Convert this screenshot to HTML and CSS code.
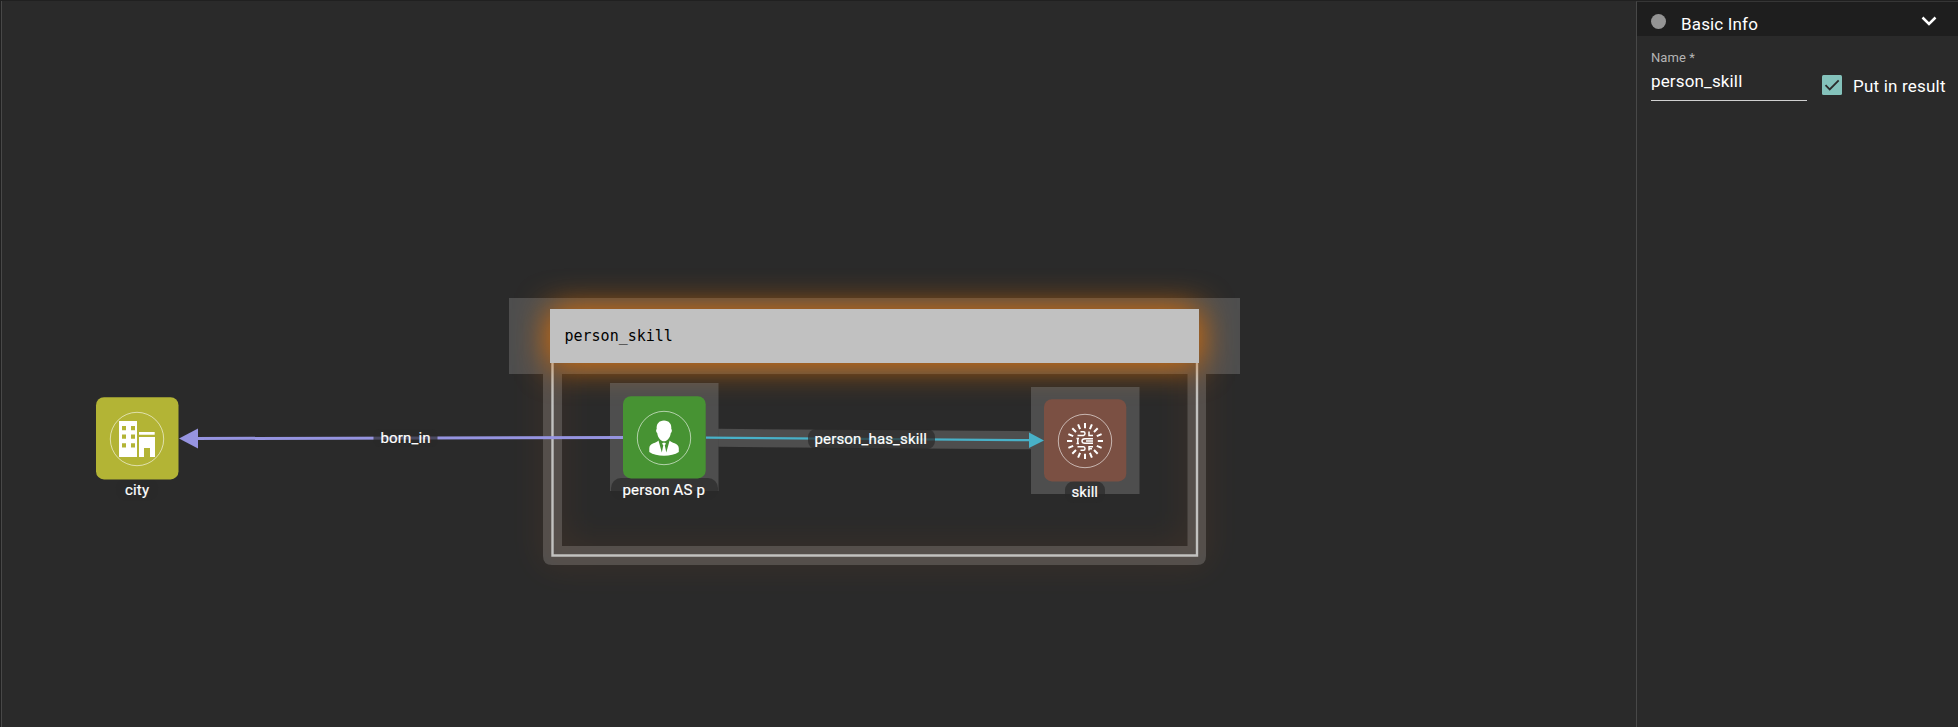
FILE: index.html
```
<!DOCTYPE html>
<html lang="en">
<head>
<meta charset="utf-8">
<title>Graph pattern</title>
<link rel="stylesheet" href="styles.css">
</head>
<body>
<div class="app">
  <main class="canvas">
    <svg class="graph" width="1636" height="727" viewBox="0 0 1636 727">
      <defs>
        <filter id="glow" filterUnits="userSpaceOnUse" x="440" y="220" width="880" height="440" color-interpolation-filters="sRGB">
          <feGaussianBlur stdDeviation="17"/>
        </filter>
      </defs>
      <rect class="halo" x="509" y="298" width="731" height="76"/>
      <path class="halo" fill-rule="evenodd" d="M543 374H1206V556Q1206 565 1197 565H552Q543 565 543 556ZM562 374V546H1187.5V374Z"/>
      <rect class="glow-frame" x="552" y="336" width="645" height="219.5" filter="url(#glow)"/>
      <path class="frame" d="M552.5 363V555.5H1197V363"/>
      <rect class="glow-head" x="550" y="309" width="649" height="56" filter="url(#glow)"/>
      <rect class="group-head" x="550" y="309" width="649" height="54"/>
      <text class="group-name" x="564.5" y="341">person_skill</text>

      <rect class="halo" x="610" y="383" width="108.5" height="108"/>
      <rect class="halo" x="1031" y="387" width="108.5" height="107"/>
      <path class="halo" d="M718.5 428.8L1031 431.2V449.3L718.5 446.8Z"/>

      <path class="edge-born" d="M196 438.5L623 437.6"/>
      <path class="arrow-born" d="M179 438.5L198 428.5V448.5Z"/>
      <path class="edge-skill" d="M706 437.7L1031 440.2"/>
      <path class="arrow-skill" d="M1044 440.4L1029 432.5V448Z"/>
      <rect class="label-bg" x="373.5" y="429" width="64" height="18" rx="6"/>
      <rect class="label-bg" x="808" y="429" width="127" height="20" rx="8"/>

      <rect class="label-bg" x="611" y="478" width="107" height="22" rx="10"/>
      <rect class="label-bg" x="1065" y="481" width="40" height="22" rx="9"/>
      <rect class="label-bg" x="116" y="478.500" width="42" height="22" rx="9"/>

      <rect class="city" x="96" y="397.200" width="82.500" height="82.200" rx="8"/>
      <circle class="ring" cx="137" cy="439" r="26.700"/>
      <path class="glyph" fill-rule="evenodd" d="M119 421H137V457H119ZM122 426v4.300h4v-4.300ZM131 426v4.300h4v-4.300ZM122 434.500v4.300h4v-4.300ZM131 434.500v4.300h4v-4.300ZM122 443.300v4.300h4v-4.300ZM131 443.300v4.300h4v-4.300Z"/>
      <path class="glyph" d="M139 432H154.700V434.700H139ZM139 437H155V457H150V448H144V457H139Z"/>

      <rect class="person" x="623" y="396.200" width="82.700" height="82.200" rx="8"/>
      <circle class="ring" cx="664" cy="438" r="26.700"/>
      <path class="glyph" d="M664 420.500C669 420.500 671.800 424 671.300 429C672.300 429.500 672 432.500 670.800 433C670.200 438 667 441.300 664 441.300S657.800 438 657.200 433C656 432.500 655.700 429.500 656.700 429C656.200 424 659 420.500 664 420.500Z"/>
      <path class="glyph" d="M658.500 440.500L661.800 452.500L663.300 445.300L662 443.800L663 442.800H665L666 443.800L664.800 445.300L666.300 452.500L669.600 440.500C671 443 678.500 443 678.800 448V452C675 454.500 670 455.800 664 455.800S653 454.500 649.300 452V448C649.600 443 657 443 658.500 440.500Z"/>

      <rect class="skill" x="1044" y="399.200" width="82.300" height="82.200" rx="8"/>
      <circle class="ring" cx="1085" cy="441" r="26.700"/>
      <g class="rays" transform="translate(1085 441)">
        <path d="M0-18V-12.800M0 18V12.800M-18 0H-12.800M18 0H12.800M-6.900-16.600L-4.900-11.800M6.900-16.600L4.900-11.800M-6.900 16.600L-4.900 11.800M6.900 16.600L4.900 11.800M-12.700-12.700L-9-9M12.700-12.700L9-9M-12.700 12.700L-9 9M12.700 12.700L9 9M-16.600-6.900L-11.800-4.900M16.600-6.900L11.800-4.900M-16.600 6.900L-11.800 4.900M16.600 6.900L11.800 4.900"/>
      </g>
      <g class="brain" transform="translate(1085 441)">
        <path d="M-4.500-9.200H-1.500Q0-9.200 0-7.500T-1.500-5.600H-7.500M4-9.500V-5.600H8M-8.500-2.500H-6M-8.500 2.500H-6M-7.200-2.500V2.500M8-2.300H0Q-3-2.300-3 0T0 2.300H8M1 0H8M-7.500 5.700H-1.500Q0 5.700 0 7.500T-1.500 9.300H-4.500M8 5.700H4V9.500M4 7.700H7"/>
      </g>

      <g class="labels">
        <text x="125" y="495" textLength="24">city</text>
        <text x="622.500" y="495" textLength="82.500">person AS p</text>
        <text x="1071.500" y="497" textLength="26.500">skill</text>
        <text x="380.500" y="443" textLength="50">born_in</text>
        <text x="814.500" y="444" textLength="112.500">person_has_skill</text>
      </g>
    </svg>
  </main>
  <aside class="panel">
    <header class="panel-head">
      <span class="dot"></span>
      <span class="title">Basic Info</span>
      <svg class="chevron" width="16" height="10" viewBox="0 0 16 10"><path d="M1.500 1.500L8 8L14.500 1.500"/></svg>
    </header>
    <div class="form">
      <label class="field">
        <span class="field-label">Name *</span>
        <span class="field-value">person_skill</span>
      </label>
      <div class="check">
        <svg width="20" height="20" viewBox="0 0 20 20"><rect width="20" height="20" rx="1.500" fill="#84c2bb"/><path d="M3.500 10.200L7.700 14.500L16.700 5.300" fill="none" stroke="#2b2b2b" stroke-width="1.800"/></svg>
        <span>Put in result</span>
      </div>
    </div>
  </aside>
</div>
</body>
</html>
```
FILE: styles.css
```
* { box-sizing: border-box; }
body { margin: 0; background: #2a2a2a; color: #fff; font-family: Roboto, sans-serif; overflow: hidden; }
.app { display: flex; width: 1958px; height: 727px; border-top: 1px solid #202020; }
.canvas { width: 1636px; height: 726px; border-left: 1px solid #202020; box-shadow: inset 1px 0 #484848; overflow: hidden; }
.graph { display: block; margin: -1px 0 0 -1px; }
.glow-frame { fill: none; stroke: #d86a20; stroke-width: 6; opacity: .38; }
.glow-head { fill: #e47000; }
.halo { fill: #999; fill-opacity: .33; }
.frame { fill: none; stroke: #c2c2c0; stroke-width: 2.400; }
.group-head { fill: #c1c1c1; }
.group-name { font: 15px "DejaVu Sans Mono", monospace; fill: #000; }
.edge-born { fill: none; stroke: #9694e0; stroke-width: 3; }
.arrow-born { fill: #9694e0; }
.edge-skill { fill: none; stroke: #48b1c8; stroke-width: 2.200; }
.arrow-skill { fill: #48b1c8; }
.label-bg { fill: #2a2a2a; fill-opacity: .7; }
.city { fill: #b3b435; }
.person { fill: #479333; }
.skill { fill: #7b5043; }
.ring { fill: none; stroke: #fff; stroke-opacity: .65; stroke-width: .9; }
.glyph { fill: #fff; }
.rays { fill: none; stroke: #fff; stroke-width: 2; }
.brain { fill: none; stroke: #fff; stroke-width: 1.500; }
.labels { font-size: 15px; fill: #fff; stroke: #fff; stroke-width: .2; }
.panel { flex: 1; border-left: 1px solid #484848; border-top: 1px solid #363636; }
.panel-head { display: flex; align-items: center; height: 34px; padding: 0 21px 0 14px; background: #1e1e1e; }
.dot { width: 15px; height: 15px; margin-top: 5px; border-radius: 50%; background: #949494; }
.title { margin: 9px 0 0 15px; font-size: 17px; line-height: 24px; letter-spacing: .15px; }
.chevron { margin: 4px 0 0 auto; fill: none; stroke: #fff; stroke-width: 2.500; }
.form { display: flex; gap: 15px; padding: 14px 0 0 14px; }
.field { display: flex; flex-direction: column; width: 156px; height: 51px; border-bottom: 1px solid #d0d0d0; }
.field-label { font-size: 13px; line-height: 15px; letter-spacing: .1px; color: #b4b4b4; }
.field-value { margin-top: 6px; font-size: 17px; line-height: 20px; letter-spacing: .15px; }
.check { display: flex; align-items: center; gap: 11px; height: 20px; margin-top: 25px; font-size: 17px; letter-spacing: .2px; white-space: nowrap; }
.check span { margin-top: 1px; }
```
